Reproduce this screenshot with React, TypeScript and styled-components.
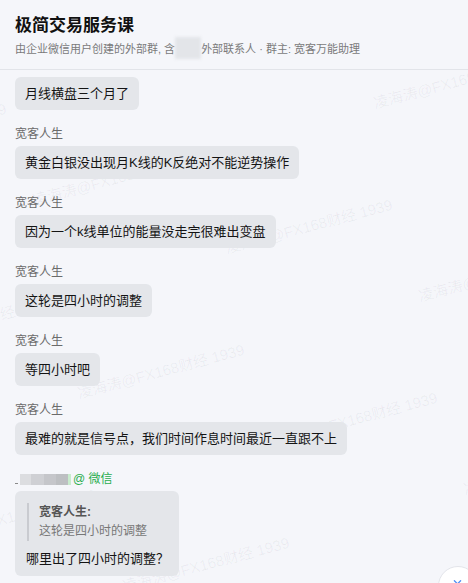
import styled, {createGlobalStyle} from "styled-components";
import {ChevronsDown} from "lucide-react";

const GlobalStyle = createGlobalStyle`
    html, body {
        margin: 0;
        padding: 0;
        background: #f5f6fa;
    }
    body {
        font-family: "Liberation Sans", "Noto Sans CJK SC", sans-serif;
        color: #1a1a1a;
    }
`

interface Message {
    id: number,
    author?: string,
    text: string,
}

const messages: Message[] = [
    {id: 1, text: "月线横盘三个月了"},
    {id: 2, author: "宽客人生", text: "黄金白银没出现月K线的K反绝对不能逆势操作"},
    {id: 3, author: "宽客人生", text: "因为一个k线单位的能量没走完很难出变盘"},
    {id: 4, author: "宽客人生", text: "这轮是四小时的调整"},
    {id: 5, author: "宽客人生", text: "等四小时吧"},
    {id: 6, author: "宽客人生", text: "最难的就是信号点，我们时间作息时间最近一直跟不上"},
]

const mosaic = [
    {w: 11, c: "#dcdde0"},
    {w: 13, c: "#cfd0d4"},
    {w: 12, c: "#c5c6ca"},
    {w: 12, c: "#bdbfc2"},
    {w: 3, c: "#c8eccd"},
]

// watermark tiles: base point plus two lattice vectors, page coords
const HEADER_H = 69;
const marks: { x: number, y: number }[] = [];
for (let j = -1; j <= 3; j++) {
    for (let i = -2; i <= 3; i++) {
        const x = 33 + i * 193 + j * 45;
        const y = 200 + i * 48 + j * 193;
        if (x > -180 && x < 468 && y > HEADER_H - 20 && y < 640) marks.push({x, y});
    }
}

export default function App() {
    return <Page>
        <GlobalStyle/>
        <Header>
            <Title>极简交易服务课</Title>
            <Subtitle>由企业微信用户创建的外部群, 含<Blurred/>外部联系人 · 群主: 宽客万能助理</Subtitle>
        </Header>
        <Chat>
            <Watermarks>
                {marks.map((m, k) => <Mark key={k} style={{left: m.x, top: m.y - HEADER_H - 11}}>凌海涛@FX168财经 1939</Mark>)}
            </Watermarks>
            <List>
                {messages.map(m => <Group key={m.id} $first={!m.author}>
                    {m.author && <Author>{m.author}</Author>}
                    <Bubble>{m.text}</Bubble>
                </Group>)}
                <Group>
                    <Author>
                        <Dot/>
                        <Mosaic>{mosaic.map((c, k) => <Cell key={k} $w={c.w} $c={c.c}/>)}</Mosaic>
                        <Wechat>@ 微信</Wechat>
                    </Author>
                    <Bubble $quoted>
                        <Quote>
                            <QuoteName>宽客人生:</QuoteName>
                            <QuoteText>这轮是四小时的调整</QuoteText>
                        </Quote>
                        哪里出了四小时的调整？
                    </Bubble>
                </Group>
            </List>
            <ScrollDown><ChevronsDown size={15} strokeWidth={2} color="#4b8cf5"/></ScrollDown>
        </Chat>
    </Page>
}

const Page = styled.div`
    height: 100vh;
    display: flex;
    flex-direction: column;
    overflow: hidden;
`

const Header = styled.div`
    flex: 0 0 auto;
    padding: 14px 15px 10px;
    border-bottom: 1px solid #e2e4e9;
    display: flex;
    flex-direction: column;
    gap: 2px;
`

const Title = styled.div`
    font-size: 17px;
    font-weight: 700;
    line-height: 24px;
    color: #111;
`

const Subtitle = styled.div`
    font-size: 11px;
    line-height: 18px;
    color: #7a7a7a;
    white-space: nowrap;
`

const Blurred = styled.span`
    display: inline-block;
    width: 26px;
    height: 22px;
    vertical-align: middle;
    margin-top: -4px;
    background: #e3e5e9;
    filter: blur(1.5px);
`

const Chat = styled.div`
    flex: 1 1 auto;
    position: relative;
    overflow: hidden;
`

const Watermarks = styled.div`
    position: absolute;
    inset: 0;
    overflow: hidden;
    pointer-events: none;
`

const Mark = styled.span`
    position: absolute;
    font-size: 15px;
    line-height: 22px;
    white-space: nowrap;
    color: rgba(40, 50, 70, 0.06);
    transform: rotate(-15deg);
    transform-origin: 0 50%;
`

const List = styled.div`
    position: relative;
    display: flex;
    flex-direction: column;
    align-items: flex-start;
    padding: 7px 15px 0;
`

const Group = styled.div<{ $first?: boolean }>`
    display: flex;
    flex-direction: column;
    align-items: flex-start;
    margin-top: ${p => p.$first ? 0 : 16}px;
`

const Author = styled.div`
    display: flex;
    align-items: center;
    font-size: 12px;
    line-height: 17px;
    color: #6b6b6b;
    margin-bottom: 3px;
`

const Bubble = styled.div<{ $quoted?: boolean }>`
    background: #e4e6ea;
    border-radius: 6px;
    padding: ${p => p.$quoted ? "7px 10px 8px 11px" : "7px 10px"};
    font-size: 13px;
    line-height: 19px;
    color: #141414;
`

const Dot = styled.span`
    width: 3px;
    height: 1px;
    margin-top: 8px;
    margin-right: 2px;
    background: #8a8a8a;
`

const Mosaic = styled.span`
    display: flex;
    height: 11px;
    margin-right: 2px;
`

const Cell = styled.span<{ $w: number, $c: string }>`
    width: ${p => p.$w}px;
    background: ${p => p.$c};
`

const Wechat = styled.span`
    color: #2aae4f;
`

const Quote = styled.div`
    margin: 5px 0 8px 1px;
    padding-left: 10px;
    border-left: 2px solid #c9cbd0;
    font-size: 12px;
    line-height: 19px;
`

const QuoteName = styled.div`
    font-weight: 700;
    color: #555;
`

const QuoteText = styled.div`
    color: #777;
`

const ScrollDown = styled.div`
    position: absolute;
    left: 438px;
    top: ${565 - HEADER_H}px;
    width: 40px;
    height: 40px;
    border-radius: 50%;
    background: #fff;
    border: 1px solid #e3e5ea;
    box-sizing: border-box;
    display: flex;
    justify-content: center;
    padding-top: 10px;
    padding-right: 2px;
`
